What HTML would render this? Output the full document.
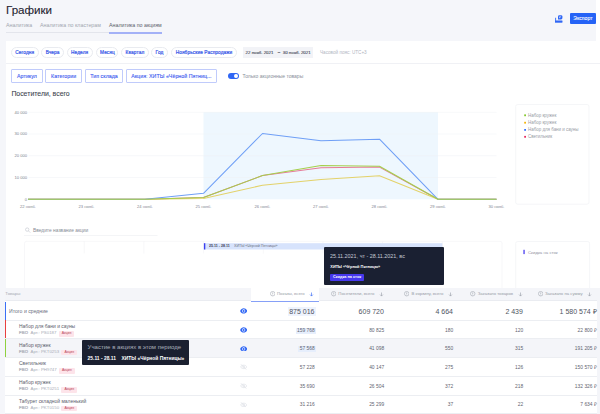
<!DOCTYPE html>
<html><head><meta charset="utf-8">
<style>
*{box-sizing:border-box;margin:0;padding:0}
html,body{width:600px;height:414px;overflow:hidden}
body{position:relative;background:#fff;font-family:"Liberation Sans",sans-serif;color:#3a3f4d}
.a{position:absolute;white-space:nowrap}
#hdr{left:0;top:0;width:595.8px;height:40.8px;background:#f5f6fa}
#title{left:6px;top:4px;font-size:11.6px;line-height:12px;color:#1f2330;-webkit-text-stroke:0.1px #1f2330}
.tab{top:22px;font-size:5.3px;line-height:7px;color:#a2a6b0}
#tabline{left:6px;top:32px;width:156px;height:1px;background:#e3e5ec}
#tabact{left:109px;top:32px;width:53px;height:1.5px;background:#a3b1f7}
#exp{left:570px;top:13.2px;width:25.8px;height:10.6px;background:#2563f6;border-radius:1px;color:#fff;font-size:5.1px;line-height:10.6px;text-align:center;-webkit-text-stroke:0.08px #fff}
#leftbg{left:0;top:40.8px;width:5.8px;height:373.2px;background:#f5f6fa}
#rightbg{left:597px;top:288px;width:3px;height:126px;background:#f4f5f9}
.pill{top:46.5px;height:11px;border:0.6px solid #e9ebf0;border-radius:6px;font-size:4.75px;line-height:10px;color:#3757e8;text-align:center;-webkit-text-stroke:0.2px #3757e8;letter-spacing:0.1px}
#sep1{left:6px;top:63px;width:594px;height:0.6px;background:#f0f1f5}
#date{left:243px;top:46.7px;width:70px;height:11.2px;background:#f2f3f7;font-size:4.35px;line-height:11.6px;color:#454a57;-webkit-text-stroke:0.12px #454a57}
#tz{left:320px;top:47px;font-size:4.63px;line-height:11px;color:#b2b6bf}
.btn{top:69.2px;height:13.5px;border:0.6px solid #c0cbfb;border-radius:1px;font-size:5.25px;line-height:12.3px;color:#3f5ef0;text-align:center;-webkit-text-stroke:0.12px #3f5ef0;letter-spacing:0.05px}
#tog{left:227.7px;top:73.2px;width:11px;height:5.6px;border-radius:3px;background:#2f66f5}
#tog:after{content:"";position:absolute;right:1.2px;top:0.9px;width:3.8px;height:3.8px;border-radius:50%;background:#fff}
#togt{left:242.5px;top:72px;font-size:5px;line-height:8px;color:#8a8f9a}
#ctitle{left:11.4px;top:88.7px;font-size:6.9px;line-height:9px;color:#3a3f4d;-webkit-text-stroke:0.08px #3a3f4d}

#tip1{left:324.3px;top:247px;width:119.7px;height:38px;background:#1a2032;border-radius:1px}

.th{font-size:4.25px;line-height:6px;color:#969ba5;display:flex;align-items:center}
.ic{display:inline-block;width:5px;height:5px;border:0.6px solid #9ea3ad;border-radius:50%;margin-right:2.2px;position:relative}
.ic:after{content:"";position:absolute;left:1.6px;top:1px;width:0.6px;height:2.2px;background:#9ea3ad}
.tv{font-size:7px;line-height:9px;color:#50555f;padding:0 1.5px}
.hlbig{background:#eef3fd}
.rv{font-size:4.9px;line-height:6px;color:#5f6470;padding:0 1.3px}
.hl{background:#e6eefc}
.nm{left:19px;font-size:4.95px;line-height:6px;color:#5c616d}
.sub{left:19px;font-size:4.5px;line-height:6px;color:#a9adb6}
.sub b{color:#a7abb4;font-weight:normal;letter-spacing:0.2px;-webkit-text-stroke:0.2px #a7abb4;font-size:4.2px}
.art{font-style:normal;margin-left:2.4px;font-size:4.35px}
.badge{display:inline-block;margin-left:2.3px;background:#fde4ea;color:#b9465a;font-size:3.5px;line-height:5.4px;padding:0 3px;border-radius:1px;vertical-align:0px}
.eyeon,.eyeoff{left:240px;width:7.4px;height:5px}
#tip2{left:82px;top:340px;width:107.4px;height:25.4px;background:#1b2030;border-radius:1px}
</style></head><body>
<div class="a" id="hdr"></div>
<div class="a" id="title">Графики</div>
<div class="a tab" style="left:6px">Аналитика</div>
<div class="a tab" style="left:40px">Аналитика по кластерам</div>
<div class="a tab" style="left:109px;color:#5a5f6b">Аналитика по акциям</div>
<div class="a" id="tabline"></div>
<div class="a" id="tabact"></div>
<svg class="a" style="left:555px;top:13.5px" width="8" height="9" viewBox="0 0 8 9"><path d="M0 3.7 H1.1 V6.7 H7.3 V8.5 H0Z" fill="#3a6ef6" opacity="0.85"/><path d="M0 6.6 H7.3 V8.5 H0Z" fill="#2f66f5"/><path d="M3 2.6 Q3 1.2 4.4 1.2 H6 Q7.4 1.2 7.4 2.6 V4 Q7.4 5.4 6 5.4 H3Z" fill="#2f66f5"/><path d="M6.2 2.6 L4.3 2.6 L4.3 4.5 Z" fill="#fff" opacity="0.9"/></svg>
<div class="a" id="exp">Экспорт</div>
<div class="a" id="leftbg"></div>
<div class="a" id="rightbg"></div>

<div class="a pill" style="left:11px;width:27.6px">Сегодня</div>
<div class="a pill" style="left:41.3px;width:22.7px">Вчера</div>
<div class="a pill" style="left:66.7px;width:25.9px">Неделя</div>
<div class="a pill" style="left:96.4px;width:22.1px">Месяц</div>
<div class="a pill" style="left:121.3px;width:27.3px">Квартал</div>
<div class="a pill" style="left:151.4px;width:16.3px">Год</div>
<div class="a pill" style="left:171px;width:66px">Ноябрьские Распродажи</div>
<div class="a" id="date"><span class="a" style="left:2.6px">22 нояб. 2021</span><span class="a" style="left:34.7px;top:-0.6px">–</span><span class="a" style="left:39.8px">30 нояб. 2021</span></div>
<div class="a" id="tz">Часовой пояс: UTC+3</div>
<div class="a" id="sep1"></div>

<div class="a btn" style="left:11px;width:32px">Артикул</div>
<div class="a btn" style="left:45.4px;width:36.5px">Категории</div>
<div class="a btn" style="left:85px;width:38px">Тип склада</div>
<div class="a btn" style="left:126px;width:90.7px">Акция: ХИТЫ «Чёрной Пятниц...</div>
<div class="a" id="tog"></div>
<div class="a" id="togt">Только акционные товары</div>
<div class="a" id="ctitle">Посетители, всего</div>

<svg class="a" style="left:0;top:0" width="600" height="290" viewBox="0 0 600 290">
<rect x="203.5" y="112.2" width="234.5" height="87.1" fill="#eef7fe"/>
<g stroke="#eef0f4" stroke-width="0.5">
<line x1="28.5" y1="112.3" x2="496.5" y2="112.3"/>
<line x1="28.5" y1="134" x2="496.5" y2="134"/>
<line x1="28.5" y1="155.7" x2="496.5" y2="155.7"/>
<line x1="28.5" y1="177.5" x2="496.5" y2="177.5"/>
</g>
<g font-family="Liberation Sans" font-size="4.1" fill="#80858f" text-anchor="end">
<text x="27" y="113.7">40 000</text>
<text x="27" y="135.4">30 000</text>
<text x="27" y="157.1">20 000</text>
<text x="27" y="178.9">10 000</text>
<text x="27" y="200.7">0</text>
</g>
<g font-family="Liberation Sans" font-size="4.1" fill="#80858f" text-anchor="middle">
<text x="28" y="207.5">22 нояб.</text>
<text x="86.5" y="207.5">23 нояб.</text>
<text x="145" y="207.5">24 нояб.</text>
<text x="203.5" y="207.5">25 нояб.</text>
<text x="262.5" y="207.5">26 нояб.</text>
<text x="321" y="207.5">27 нояб.</text>
<text x="379.5" y="207.5">28 нояб.</text>
<text x="438" y="207.5">29 нояб.</text>
<text x="496.5" y="207.5">30 нояб.</text>
</g>
<polyline points="28,199.3 86.5,199.3 145,199.3 203.5,197.4 262.5,175.6 321,167.7 379.5,167.1 438,199.3 496.5,199.3" fill="none" stroke="#e57c98" stroke-width="1.05" stroke-linejoin="round"/>
<polyline points="28,199.3 86.5,199.3 145,199.3 203.5,198.6 262.5,185.2 321,179.5 379.5,175.7 438,199.3 496.5,199.3" fill="none" stroke="#e3d26a" stroke-width="1.05" stroke-linejoin="round"/>
<polyline points="28,199.3 86.5,199.3 145,199.3 203.5,193.3 262.5,133.5 321,140.8 379.5,139.2 438,199.3 496.5,199.3" fill="none" stroke="#6f9ff6" stroke-width="1.05" stroke-linejoin="round"/>
<polyline points="28,199.3 86.5,199.3 145,199.3 203.5,197.4 262.5,175.6 321,165.5 379.5,166.2 438,199.3 496.5,199.3" fill="none" stroke="#a5cf4c" stroke-width="1.05" stroke-linejoin="round"/>
<rect x="515.7" y="104.5" width="73.3" height="99.7" rx="2" fill="none" stroke="#eef0f4" stroke-width="0.6"/>
<rect x="524.2" y="114.4" width="1.8" height="1.8" fill="#86c92e"/>
<rect x="524.2" y="121.8" width="1.8" height="1.8" fill="#f5b50a"/>
<rect x="524.2" y="129" width="1.8" height="1.8" fill="#3572ff"/>
<rect x="524.2" y="135.9" width="1.8" height="1.8" fill="#e62d63"/>
<g font-family="Liberation Sans" font-size="4.45" fill="#979ca6">
<text x="528" y="116.9">Набор кружек</text>
<text x="528" y="124.3">Набор кружек</text>
<text x="528" y="131.2">Набор для бани и сауны</text>
<text x="528" y="138.4">Светильник</text>
</g>
<!-- search -->
<circle cx="27.2" cy="229.6" r="1.7" fill="none" stroke="#b5b9c2" stroke-width="0.5"/>
<line x1="28.4" y1="230.8" x2="30.2" y2="232.6" stroke="#b5b9c2" stroke-width="0.5"/>
<text x="33" y="231.9" font-family="Liberation Sans" font-size="4.85" fill="#878c96">Введите название акции</text>
<line x1="24" y1="235.5" x2="157.5" y2="235.5" stroke="#eceef2" stroke-width="0.6"/>
<!-- timeline grid -->
<path d="M24.5 288 V243.3 Q24.5 241.3 26.5 241.3 H500 Q502 241.3 502 243.3 V288" fill="none" stroke="#f1f2f5" stroke-width="0.6"/>
<g stroke="#f1f2f5" stroke-width="0.6">
<line x1="84.2" y1="241.3" x2="84.2" y2="253.5"/>
<line x1="143.9" y1="241.3" x2="143.9" y2="253.5"/>
<line x1="203.6" y1="241.3" x2="203.6" y2="253.5"/>
<line x1="263.3" y1="241.3" x2="263.3" y2="253.5"/>
<line x1="323" y1="241.3" x2="323" y2="253.5"/>
<line x1="382.6" y1="241.3" x2="382.6" y2="253.5"/>
<line x1="442.3" y1="241.3" x2="442.3" y2="253.5"/>
</g>
<rect x="203.9" y="243.2" width="238.5" height="6.3" fill="#d7e3fc"/>
<rect x="203.9" y="243.2" width="1.4" height="6.3" fill="#3b3ff0"/>


<rect x="515.7" y="241.5" width="73.9" height="60" rx="2" fill="none" stroke="#eef0f4" stroke-width="0.6"/>
<rect x="523.4" y="249.8" width="1.3" height="4.3" fill="#4b3ff0"/>
<text x="528" y="253.5" font-family="Liberation Sans" font-size="4.3" fill="#8f949e">Скидка на сток</text>
</svg>
<div class="a" style="left:208.8px;top:243.4px;font-size:7.2px;line-height:12px;font-weight:bold;color:#3f4452;transform:scale(0.5);transform-origin:0 0">25.11 - 28.11</div>
<div class="a" style="left:234px;top:243.4px;font-size:7.2px;line-height:12px;color:#6a6f7b;transform:scale(0.5);transform-origin:0 0">ХИТЫ «Чёрной Пятницы»</div>
<div class="a" id="tip1">
<div class="a" style="left:6px;top:5.3px;font-size:6px;line-height:8px;color:#c5c9d4;transform:scaleX(0.9);transform-origin:0 0">25.11.2021, чт - 28.11.2021, вс</div>
<div class="a" style="left:6px;top:17.3px;font-size:3.9px;line-height:5px;font-weight:bold;color:#fff">ХИТЫ «Чёрной Пятницы»</div>
<div class="a" style="left:5.8px;top:27px;width:34px;height:6.5px;border-radius:1px;background:#4638ee;font-size:3.8px;line-height:6.5px;font-weight:bold;color:#fff;text-align:center">Скидка на сток</div>
</div>
<!--TBL-->
<div class="a" style="left:5px;top:288.3px;width:592px;height:126px;background:#fff"></div>
<div class="a" style="left:5px;top:288.3px;width:592px;height:12.7px;background:#f4f5f9;border-bottom:0.6px solid #eaecf1"></div>
<div class="a" style="left:250.8px;top:288.3px;width:67.80px;height:12.7px;background:#fff"></div>
<div class="a" style="left:250.8px;top:300.6px;width:67.80px;height:1px;background:#86a0f7"></div>
<div class="a" style="left:5.3px;top:291.3px;font-size:4.4px;line-height:6px;color:#a4a9b3">Товары</div>
<div class="a th" style="right:285.80px;top:291px"><svg width="5.4" height="5.4" viewBox="0 0 10 10" style="margin-right:2px"><circle cx="5" cy="5" r="4.2" fill="none" stroke="#9ea3ad" stroke-width="1"/><path d="M5 2.6 V6" stroke="#9ea3ad" stroke-width="1.1"/><circle cx="5" cy="7.4" r="0.6" fill="#9ea3ad"/></svg><span>Показы, всего</span><svg width="5" height="5" viewBox="0 0 10 10" style="margin-left:4.6px"><path d="M5 1 V8 M2.2 5.2 L5 8.2 L7.8 5.2" stroke="#3a6cf6" stroke-width="1.3" fill="none"/></svg></div>
<div class="a th" style="right:216.10px;top:291px"><svg width="5.4" height="5.4" viewBox="0 0 10 10" style="margin-right:2px"><circle cx="5" cy="5" r="4.2" fill="none" stroke="#9ea3ad" stroke-width="1"/><path d="M5 2.6 V6" stroke="#9ea3ad" stroke-width="1.1"/><circle cx="5" cy="7.4" r="0.6" fill="#9ea3ad"/></svg><span>Посетители, всего</span><svg width="5" height="5" viewBox="0 0 10 10" style="margin-left:4.6px"><path d="M5 1 V8 M2.2 5.2 L5 8.2 L7.8 5.2" stroke="#9ea3ad" stroke-width="1.3" fill="none"/></svg></div>
<div class="a th" style="right:147.10px;top:291px"><svg width="5.4" height="5.4" viewBox="0 0 10 10" style="margin-right:2px"><circle cx="5" cy="5" r="4.2" fill="none" stroke="#9ea3ad" stroke-width="1"/><path d="M5 2.6 V6" stroke="#9ea3ad" stroke-width="1.1"/><circle cx="5" cy="7.4" r="0.6" fill="#9ea3ad"/></svg><span>В корзину, всего</span><svg width="5" height="5" viewBox="0 0 10 10" style="margin-left:4.6px"><path d="M5 1 V8 M2.2 5.2 L5 8.2 L7.8 5.2" stroke="#9ea3ad" stroke-width="1.3" fill="none"/></svg></div>
<div class="a th" style="right:77.40px;top:291px"><svg width="5.4" height="5.4" viewBox="0 0 10 10" style="margin-right:2px"><circle cx="5" cy="5" r="4.2" fill="none" stroke="#9ea3ad" stroke-width="1"/><path d="M5 2.6 V6" stroke="#9ea3ad" stroke-width="1.1"/><circle cx="5" cy="7.4" r="0.6" fill="#9ea3ad"/></svg><span>Заказано товаров</span><svg width="5" height="5" viewBox="0 0 10 10" style="margin-left:4.6px"><path d="M5 1 V8 M2.2 5.2 L5 8.2 L7.8 5.2" stroke="#9ea3ad" stroke-width="1.3" fill="none"/></svg></div>
<div class="a th" style="right:7.90px;top:291px"><svg width="5.4" height="5.4" viewBox="0 0 10 10" style="margin-right:2px"><circle cx="5" cy="5" r="4.2" fill="none" stroke="#9ea3ad" stroke-width="1"/><path d="M5 2.6 V6" stroke="#9ea3ad" stroke-width="1.1"/><circle cx="5" cy="7.4" r="0.6" fill="#9ea3ad"/></svg><span>Заказано на сумму</span><svg width="5" height="5" viewBox="0 0 10 10" style="margin-left:4.6px"><path d="M5 1 V8 M2.2 5.2 L5 8.2 L7.8 5.2" stroke="#9ea3ad" stroke-width="1.3" fill="none"/></svg></div>
<div class="a" style="left:5px;top:301.6px;width:1.1px;height:18.4px;background:#3b6ff5"></div>
<div class="a" style="left:9px;top:307.2px;font-size:5.15px;line-height:8px;color:#6b7080">Итого и средние</div>
<div class="a" style="left:5px;top:319.7px;width:592px;height:0.6px;background:#eceef2"></div>
<svg class="a" style="left:240px;top:308.3px" width="7.4" height="5.8" viewBox="0 0 14.8 11.6"><path d="M0.3 5.8 C2.8 -1.3 12 -1.3 14.5 5.8 C12 12.9 2.8 12.9 0.3 5.8Z" fill="#2f66f5"/><circle cx="7.4" cy="5.8" r="3.1" fill="#fff"/><circle cx="7.4" cy="5.8" r="2" fill="#2f66f5"/></svg>
<div class="a tv hlbig" style="right:284.00px;top:306.5px">875 016</div>
<div class="a tv" style="right:214.60px;top:306.5px">609 720</div>
<div class="a tv" style="right:145.50px;top:306.5px">4 664</div>
<div class="a tv" style="right:75.60px;top:306.5px">2 439</div>
<div class="a tv" style="right:1.80px;top:306.5px">1 580 574 ₽</div>
<div class="a" style="left:5px;top:320px;width:1.1px;height:18.50px;background:#e8403f"></div>
<div class="a" style="left:5px;top:338.20px;width:592px;height:0.6px;background:#eceef2"></div>
<div class="a nm" style="top:324.20px">Набор для бани и сауны</div>
<div class="a sub" style="top:330.10px"><b>FBO</b><i class="art">Арт.: PS0187</i><span class="badge">Акция</span></div>
<svg class="a" style="left:240px;top:327.05px" width="7.4" height="5.8" viewBox="0 0 14.8 11.6"><path d="M0.3 5.8 C2.8 -1.3 12 -1.3 14.5 5.8 C12 12.9 2.8 12.9 0.3 5.8Z" fill="#2f66f5"/><circle cx="7.4" cy="5.8" r="3.1" fill="#fff"/><circle cx="7.4" cy="5.8" r="2" fill="#2f66f5"/></svg>
<div class="a rv hl" style="right:284.00px;top:327.60px">159 768</div>
<div class="a rv" style="right:214.60px;top:327.60px">80 825</div>
<div class="a rv" style="right:145.50px;top:327.60px">180</div>
<div class="a rv" style="right:75.60px;top:327.60px">120</div>
<div class="a rv" style="right:1.80px;top:327.60px">22 800 ₽</div>
<div class="a" style="left:5px;top:338.5px;width:592px;height:18.50px;background:#f4f5f9"></div>
<div class="a" style="left:5px;top:338.5px;width:1.1px;height:18.50px;background:#8fd13f"></div>
<div class="a" style="left:5px;top:356.70px;width:592px;height:0.6px;background:#eceef2"></div>
<div class="a nm" style="top:342.70px">Набор кружек</div>
<div class="a sub" style="top:348.60px"><b>FBO</b><i class="art">Арт.: PKT0253</i><span class="badge">Акция</span></div>
<svg class="a" style="left:240px;top:345.55px" width="7.4" height="5.8" viewBox="0 0 14.8 11.6"><path d="M0.3 5.8 C2.8 -1.3 12 -1.3 14.5 5.8 C12 12.9 2.8 12.9 0.3 5.8Z" fill="#2f66f5"/><circle cx="7.4" cy="5.8" r="3.1" fill="#fff"/><circle cx="7.4" cy="5.8" r="2" fill="#2f66f5"/></svg>
<div class="a rv hl" style="right:284.00px;top:346.10px">57 568</div>
<div class="a rv" style="right:214.60px;top:346.10px">41 098</div>
<div class="a rv" style="right:145.50px;top:346.10px">550</div>
<div class="a rv" style="right:75.60px;top:346.10px">315</div>
<div class="a rv" style="right:1.80px;top:346.10px">191 205 ₽</div>
<div class="a" style="left:5px;top:375.70px;width:592px;height:0.6px;background:#eceef2"></div>
<div class="a nm" style="top:361.20px">Светильник</div>
<div class="a sub" style="top:367.10px"><b>FBO</b><i class="art">Арт.: PH9747</i><span class="badge">Акция</span></div>
<svg class="a" style="left:240px;top:364.30px" width="7.4" height="5.8" viewBox="0 0 14.8 11.6"><path d="M1 5.8 C3.4 1.2 11.4 1.2 13.8 5.8 C11.4 10.4 3.4 10.4 1 5.8Z" fill="none" stroke="#dcdfe5" stroke-width="1.3"/><circle cx="7.4" cy="5.8" r="1.9" fill="none" stroke="#dcdfe5" stroke-width="1.2"/><line x1="2" y1="0.6" x2="12.6" y2="11.2" stroke="#dcdfe5" stroke-width="1.3"/></svg>
<div class="a rv" style="right:284.00px;top:364.60px">57 228</div>
<div class="a rv" style="right:214.60px;top:364.60px">40 147</div>
<div class="a rv" style="right:145.50px;top:364.60px">275</div>
<div class="a rv" style="right:75.60px;top:364.60px">126</div>
<div class="a rv" style="right:1.80px;top:364.60px">150 570 ₽</div>
<div class="a" style="left:5px;top:394.50px;width:592px;height:0.6px;background:#eceef2"></div>
<div class="a nm" style="top:380.20px">Набор кружек</div>
<div class="a sub" style="top:386.10px"><b>FBO</b><i class="art">Арт.: PKT0251</i><span class="badge">Акция</span></div>
<svg class="a" style="left:240px;top:383.20px" width="7.4" height="5.8" viewBox="0 0 14.8 11.6"><path d="M1 5.8 C3.4 1.2 11.4 1.2 13.8 5.8 C11.4 10.4 3.4 10.4 1 5.8Z" fill="none" stroke="#dcdfe5" stroke-width="1.3"/><circle cx="7.4" cy="5.8" r="1.9" fill="none" stroke="#dcdfe5" stroke-width="1.2"/><line x1="2" y1="0.6" x2="12.6" y2="11.2" stroke="#dcdfe5" stroke-width="1.3"/></svg>
<div class="a rv" style="right:284.00px;top:383.60px">35 690</div>
<div class="a rv" style="right:214.60px;top:383.60px">26 504</div>
<div class="a rv" style="right:145.50px;top:383.60px">372</div>
<div class="a rv" style="right:75.60px;top:383.60px">218</div>
<div class="a rv" style="right:1.80px;top:383.60px">132 326 ₽</div>
<div class="a" style="left:5px;top:412.70px;width:592px;height:0.6px;background:#eceef2"></div>
<div class="a nm" style="top:399.00px">Табурет складной маленький</div>
<div class="a sub" style="top:404.90px"><b>FBO</b><i class="art">Арт.: PKT0150</i><span class="badge">Акция</span></div>
<svg class="a" style="left:240px;top:401.70px" width="7.4" height="5.8" viewBox="0 0 14.8 11.6"><path d="M1 5.8 C3.4 1.2 11.4 1.2 13.8 5.8 C11.4 10.4 3.4 10.4 1 5.8Z" fill="none" stroke="#dcdfe5" stroke-width="1.3"/><circle cx="7.4" cy="5.8" r="1.9" fill="none" stroke="#dcdfe5" stroke-width="1.2"/><line x1="2" y1="0.6" x2="12.6" y2="11.2" stroke="#dcdfe5" stroke-width="1.3"/></svg>
<div class="a rv" style="right:284.00px;top:402.40px">31 216</div>
<div class="a rv" style="right:214.60px;top:402.40px">25 299</div>
<div class="a rv" style="right:145.50px;top:402.40px">37</div>
<div class="a rv" style="right:75.60px;top:402.40px">22</div>
<div class="a rv" style="right:1.80px;top:402.40px">7 634 ₽</div>
<div class="a" id="tip2">
<div class="a" style="left:5.6px;top:4px;font-size:6.05px;line-height:7px;color:#a9aebb">Участие в акциях в этом периоде</div>
<div class="a" style="left:5.6px;top:15px;font-size:4.9px;line-height:7px;font-weight:bold;color:#fff">25.11 - 28.11<span style="position:absolute;left:34px">ХИТЫ «Чёрной Пятницы»</span></div>
</div>
<!--/TBL-->
</body></html>
